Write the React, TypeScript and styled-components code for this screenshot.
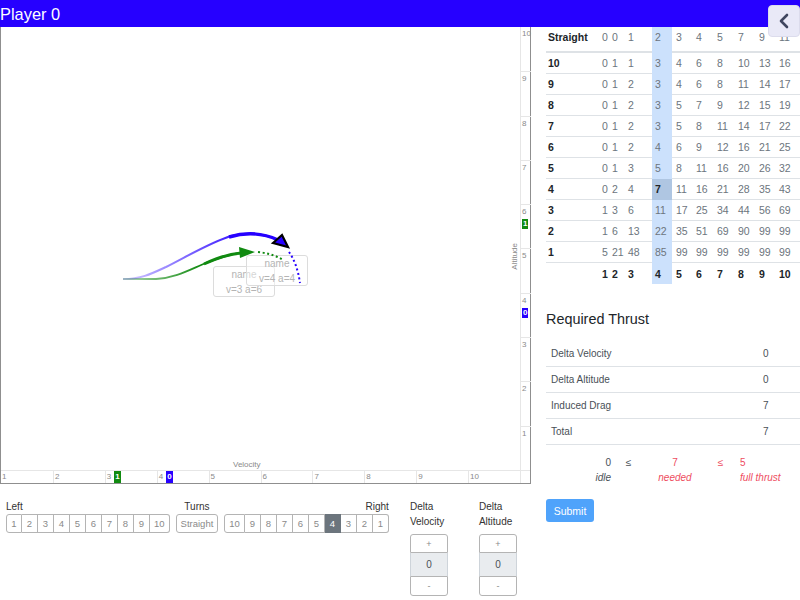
import React from "react";
import styled, { createGlobalStyle } from "styled-components";

const BLUE = "#2600ff";
const GREEN = "#108a10";
const RED = "#ee4c60";
const HL = "#cce1fc";
const HL_DARK = "#afc6e2";
const LINE = "#dee2e6";
const AXIS_LINE = "#e6e6e6";

const GlobalStyle = createGlobalStyle`
  * { box-sizing: border-box; }
  html, body { margin: 0; padding: 0; background: #fff; }
  body {
    font-family: "Liberation Sans", Arial, Helvetica, sans-serif;
    color: #212529;
    overflow: hidden;
  }
`;

const Header = styled.header`
  height: 27px;
  background: ${BLUE};
  color: #fff;
  font-size: 16.4px;
  line-height: 28px;
  white-space: nowrap;
`;

const BackButton = styled.button`
  position: fixed;
  top: 5px;
  right: 0;
  width: 32px;
  height: 32px;
  padding: 0;
  border: 1px solid #dcdcec;
  border-radius: 4px;
  background: #e9e9f7;
  display: flex;
  align-items: center;
  justify-content: center;
`;

const Page = styled.main`
  display: grid;
  grid-template-columns: 532px 268px;
  grid-template-rows: 457px auto;
`;

/* ---------- chart ---------- */
const ChartFrame = styled.div`
  width: 531px;
  height: 457px;
  border: 1px solid #8f8f8f;
  border-top: none;
  display: grid;
  grid-template-columns: 519px 10px;
  grid-template-rows: 443px 13px;
`;

const Plot = styled.div`
  position: relative;
  overflow: hidden;
`;

const PlotSvg = styled.svg`
  position: absolute;
  left: 0;
  top: 0;
`;

const AxisTitle = styled.div<{ $vertical?: boolean }>`
  position: absolute;
  font-size: 8px;
  line-height: 9px;
  color: #8a8a8a;
  white-space: nowrap;
  ${(p) =>
    p.$vertical
      ? `right: 1px; top: 216px; writing-mode: vertical-rl; transform: rotate(180deg);`
      : `left: 232px; top: 433px;`}
`;

const NameTag = styled.div<{ $x: number; $y: number }>`
  position: absolute;
  left: ${(p) => p.$x}px;
  top: ${(p) => p.$y}px;
  width: 62px;
  height: 31px;
  border: 1px solid #dcdcdc;
  border-radius: 3px;
  background: rgba(255, 255, 255, 0.45);
  color: #b4b4b4;
  font-size: 10px;
  line-height: 15px;
  text-align: center;
`;

const YAxis = styled.div`
  display: grid;
  grid-template-rows: repeat(10, 1fr);
  border-left: 1px solid ${AXIS_LINE};
`;

const YCell = styled.div<{ $first?: boolean }>`
  border-top: ${(p) => (p.$first ? "none" : `1px solid ${AXIS_LINE}`)};
  padding: 2px 0 0 1px;
  font-size: 8px;
  line-height: 9px;
  color: #8a8a8a;
  display: flex;
  flex-direction: column;
  align-items: flex-start;
`;

const XAxis = styled.div`
  display: grid;
  grid-template-columns: repeat(10, 1fr);
  border-top: 1px solid ${AXIS_LINE};
`;

const XCell = styled.div<{ $first?: boolean }>`
  border-left: ${(p) => (p.$first ? "none" : `1px solid ${AXIS_LINE}`)};
  padding-left: 1px;
  font-size: 8px;
  line-height: 12px;
  color: #8a8a8a;
  display: flex;
  align-items: center;
  gap: 3px;
`;

const Corner = styled.div`
  border-top: 1px solid ${AXIS_LINE};
  border-left: 1px solid ${AXIS_LINE};
`;

const Badge = styled.span<{ $color: string; $inY?: boolean }>`
  display: inline-block;
  background: ${(p) => p.$color};
  color: #fff;
  font-weight: 700;
  font-size: 8px;
  line-height: ${(p) => (p.$inY ? "10px" : "12px")};
  padding: 0 1px;
  margin-top: ${(p) => (p.$inY ? "3px" : "0")};
`;

/* ---------- right panel ---------- */
const RightTop = styled.section`
  padding-left: 14px;
  display: flex;
  flex-direction: column;
`;

const COLS = "54px 8px 12px 32px 20px 21px 21px 21px 21px 21px 23px";
const PADS = [2, 2, 4, 8, 3, 4, 3, 3, 3, 3, 2];

type Kind = "head" | "body" | "foot";

const TRow = styled.div<{ $kind: Kind }>`
  display: grid;
  grid-template-columns: ${COLS};
  height: ${(p) => (p.$kind === "head" ? 26 : 21)}px;
`;

const TCell = styled.div<{
  $kind: Kind;
  $hl?: boolean;
  $dark?: boolean;
  $strong?: boolean;
  $pad: number;
}>`
  display: flex;
  align-items: center;
  padding-left: ${(p) => p.$pad}px;
  padding-bottom: ${(p) => (p.$kind === "head" ? 4 : 0)}px;
  font-size: 10.5px;
  white-space: nowrap;
  font-weight: ${(p) => (p.$strong ? 700 : 400)};
  color: ${(p) => (p.$strong ? "#212529" : "#6c757d")};
  background: ${(p) => (p.$dark ? HL_DARK : p.$hl ? HL : "transparent")};
  border-bottom: ${(p) =>
    p.$kind === "head" ? "2px" : p.$kind === "body" ? "1px" : "0"}
    solid ${(p) => (p.$hl ? (p.$dark ? HL_DARK : HL) : LINE)};
`;

const ThrustTitle = styled.h2`
  margin: 27px 0 0;
  font-size: 14.4px;
  font-weight: 400;
  line-height: 17px;
  color: #212529;
`;

const ThrustTable = styled.div`
  margin-top: 13px;
  display: flex;
  flex-direction: column;
`;

const ThrustRow = styled.div`
  display: grid;
  grid-template-columns: 214px 40px;
  height: 26px;
  border-bottom: 1px solid ${LINE};
  font-size: 10px;
  color: #495057;
`;

const ThrustCell = styled.div<{ $value?: boolean }>`
  display: flex;
  align-items: center;
  padding-left: ${(p) => (p.$value ? 3 : 5)}px;
`;

const Summary = styled.div`
  margin-top: 10px;
  display: grid;
  grid-template-columns: 65px 35px 58px 33px 63px;
  font-size: 10px;
  line-height: 15px;
`;

const SumCell = styled.div<{
  $align: "left" | "center" | "right";
  $red?: boolean;
  $italic?: boolean;
}>`
  text-align: ${(p) => p.$align};
  padding-left: ${(p) => (p.$align === "left" ? 3 : 0)}px;
  color: ${(p) => (p.$red ? RED : "#495057")};
  font-style: ${(p) => (p.$italic ? "italic" : "normal")};
  white-space: nowrap;
`;

/* ---------- controls ---------- */
const Controls = styled.section`
  padding: 16px 0 0 6px;
  display: flex;
  align-items: flex-start;
`;

const TurnBlock = styled.div`
  flex-shrink: 0;
  display: grid;
  grid-template-columns: auto auto auto;
  column-gap: 6px;
`;

const TurnLabel = styled.div<{ $align: "start" | "center" | "end" }>`
  justify-self: ${(p) => p.$align};
  font-size: 10px;
  line-height: 14px;
  color: #333;
`;

const BtnGroup = styled.div`
  display: flex;
`;

const TurnBtn = styled.button<{ $active?: boolean; $pos: "first" | "mid" | "last" | "only" }>`
  height: 19px;
  min-width: 16px;
  margin: 0;
  padding: 0 4px;
  font-family: inherit;
  font-size: 9.5px;
  line-height: 17px;
  color: ${(p) => (p.$active ? "#fff" : "#8a8a8a")};
  background: ${(p) => (p.$active ? "#6c757d" : "#fff")};
  border: 1px solid ${(p) => (p.$active ? "#6c757d" : "#b4b4b4")};
  border-left-width: ${(p) => (p.$pos === "first" || p.$pos === "only" ? 1 : 0)}px;
  border-radius: ${(p) =>
    p.$pos === "only"
      ? "3px"
      : p.$pos === "first"
      ? "3px 0 0 3px"
      : p.$pos === "last"
      ? "0 3px 3px 0"
      : "0"};
`;

const StepBlock = styled.div<{ $gap: number }>`
  flex-shrink: 0;
  width: 69px;
  margin-left: ${(p) => p.$gap}px;
  margin-top: -1px;
`;

const StepLabel = styled.div`
  font-size: 10px;
  line-height: 15px;
  color: #333;
`;

const Stepper = styled.div`
  width: 38px;
  margin-top: 5px;
  display: flex;
  flex-direction: column;
`;

const StepBtn = styled.button<{ $top?: boolean }>`
  height: ${(p) => (p.$top ? 19 : 20)}px;
  margin: 0;
  padding: 0;
  font-family: inherit;
  font-size: 9px;
  color: #8a8a8a;
  background: #fff;
  border: 1px solid #b4b4b4;
  border-radius: ${(p) => (p.$top ? "3px 3px 0 0" : "0 0 3px 3px")};
`;

const StepValue = styled.div`
  height: 23px;
  background: #e9ecef;
  border-left: 1px solid #ced4da;
  border-right: 1px solid #ced4da;
  font-size: 10px;
  color: #495057;
  display: flex;
  align-items: center;
  justify-content: center;
`;

const SubmitCell = styled.div`
  padding: 15px 0 0 14px;
`;

const SubmitButton = styled.button`
  width: 48px;
  height: 23px;
  padding: 0;
  border: none;
  border-radius: 3px;
  background: #4fa3fb;
  color: #fff;
  font-family: inherit;
  font-size: 10.5px;
`;

/* ---------- data ---------- */
const STRAIGHT = [0, 0, 1, 2, 3, 4, 5, 7, 9, 11];
const ROWS: [number, number[]][] = [
  [10, [0, 1, 1, 3, 4, 6, 8, 10, 13, 16]],
  [9, [0, 1, 2, 3, 4, 6, 8, 11, 14, 17]],
  [8, [0, 1, 2, 3, 5, 7, 9, 12, 15, 19]],
  [7, [0, 1, 2, 3, 5, 8, 11, 14, 17, 22]],
  [6, [0, 1, 2, 4, 6, 9, 12, 16, 21, 25]],
  [5, [0, 1, 3, 5, 8, 11, 16, 20, 26, 32]],
  [4, [0, 2, 4, 7, 11, 16, 21, 28, 35, 43]],
  [3, [1, 3, 6, 11, 17, 25, 34, 44, 56, 69]],
  [2, [1, 6, 13, 22, 35, 51, 69, 90, 99, 99]],
  [1, [5, 21, 48, 85, 99, 99, 99, 99, 99, 99]],
];
const SEL_COL = 3;
const SEL_ROW = 4;

const THRUST = [
  ["Delta Velocity", "0"],
  ["Delta Altitude", "0"],
  ["Induced Drag", "7"],
  ["Total", "7"],
];

const posOf = (i: number, n: number): "first" | "mid" | "last" | "only" =>
  n === 1 ? "only" : i === 0 ? "first" : i === n - 1 ? "last" : "mid";

function TableRow({
  kind,
  label,
  values,
  rowNum,
  strongValues,
}: {
  kind: Kind;
  label: string;
  values: (number | string)[];
  rowNum?: number;
  strongValues?: boolean;
}) {
  return (
    <TRow $kind={kind}>
      <TCell $kind={kind} $pad={PADS[0]} $strong>
        {label}
      </TCell>
      {values.map((v, i) => (
        <TCell
          key={i}
          $kind={kind}
          $pad={PADS[i + 1]}
          $hl={i === SEL_COL}
          $dark={i === SEL_COL && rowNum === SEL_ROW}
          $strong={strongValues || (i === SEL_COL && rowNum === SEL_ROW)}
        >
          {v}
        </TCell>
      ))}
    </TRow>
  );
}

function Chart() {
  return (
    <ChartFrame>
      <Plot>
        <NameTag $x={212} $y={239}>
          name
          <br />
          v=3 a=6
        </NameTag>
        <NameTag $x={245} $y={228}>
          name
          <br />
          v=4 a=4
        </NameTag>
        <PlotSvg width="519" height="443" viewBox="0 0 519 443">
          <defs>
            <linearGradient id="blueFade" gradientUnits="userSpaceOnUse" x1="122" y1="0" x2="225" y2="0">
              <stop offset="0" stopColor={BLUE} stopOpacity="0.18" />
              <stop offset="1" stopColor={BLUE} stopOpacity="0.85" />
            </linearGradient>
            <linearGradient id="greenFade" gradientUnits="userSpaceOnUse" x1="122" y1="0" x2="200" y2="0">
              <stop offset="0" stopColor={GREEN} stopOpacity="0.3" />
              <stop offset="1" stopColor={GREEN} stopOpacity="1" />
            </linearGradient>
          </defs>
          {/* green plane */}
          <path
            d="M122,252 L155,252 C175,251 190,242 205,236 C218,231 228,227 240,226"
            fill="none"
            stroke="url(#greenFade)"
            strokeWidth="1.8"
          />
          <path d="M203,237 C216,231 228,227 240,226" fill="none" stroke={GREEN} strokeWidth="3" />
          <polygon points="238,220 239,231 254,225" fill={GREEN} />
          <path
            d="M257,225 C266,226 274,228 282,233"
            fill="none"
            stroke={GREEN}
            strokeWidth="2"
            strokeDasharray="2 2.6"
          />
          {/* blue plane */}
          <path
            d="M122,252 C140,252 150,247 165,240 C185,230 210,215 230,209 C245,205 262,206 277,213"
            fill="none"
            stroke="url(#blueFade)"
            strokeWidth="2"
          />
          <path d="M228,210 C245,205 262,206 277,213" fill="none" stroke={BLUE} strokeWidth="3.4" />
          <polygon
            points="272,216 281,208 287,220"
            fill={BLUE}
            stroke="#000"
            strokeWidth="2.2"
            strokeLinejoin="miter"
          />
          <path
            d="M288,225 C293,232 297,242 299,256"
            fill="none"
            stroke={BLUE}
            strokeWidth="2"
            strokeDasharray="2 2.6"
          />
        </PlotSvg>
        <AxisTitle>Velocity</AxisTitle>
        <AxisTitle $vertical>Altitude</AxisTitle>
      </Plot>
      <YAxis>
        {[10, 9, 8, 7, 6, 5, 4, 3, 2, 1].map((n, i) => (
          <YCell key={n} $first={i === 0}>
            <span>{n}</span>
            {n === 6 && (
              <Badge $color={GREEN} $inY>
                1
              </Badge>
            )}
            {n === 4 && (
              <Badge $color={BLUE} $inY>
                0
              </Badge>
            )}
          </YCell>
        ))}
      </YAxis>
      <XAxis>
        {[1, 2, 3, 4, 5, 6, 7, 8, 9, 10].map((n, i) => (
          <XCell key={n} $first={i === 0}>
            <span>{n}</span>
            {n === 3 && <Badge $color={GREEN}>1</Badge>}
            {n === 4 && <Badge $color={BLUE}>0</Badge>}
          </XCell>
        ))}
      </XAxis>
      <Corner />
    </ChartFrame>
  );
}

export default function App() {
  const left = ["1", "2", "3", "4", "5", "6", "7", "8", "9", "10"];
  const right = ["10", "9", "8", "7", "6", "5", "4", "3", "2", "1"];
  return (
    <>
      <GlobalStyle />
      <Header>Player 0</Header>
      <BackButton aria-label="back">
        <svg width="12" height="16" viewBox="0 0 12 16">
          <polyline
            points="9,2 3,8 9,14"
            fill="none"
            stroke="#40465f"
            strokeWidth="2.6"
            strokeLinecap="round"
            strokeLinejoin="round"
          />
        </svg>
      </BackButton>
      <Page>
        <Chart />
        <RightTop>
          <div>
            <TableRow kind="head" label="Straight" values={STRAIGHT} />
            {ROWS.map(([n, vals]) => (
              <TableRow key={n} kind="body" label={String(n)} values={vals} rowNum={n} />
            ))}
            <TableRow kind="foot" label="" values={[1, 2, 3, 4, 5, 6, 7, 8, 9, 10]} strongValues />
          </div>
          <ThrustTitle>Required Thrust</ThrustTitle>
          <ThrustTable>
            {THRUST.map(([k, v]) => (
              <ThrustRow key={k}>
                <ThrustCell>{k}</ThrustCell>
                <ThrustCell $value>{v}</ThrustCell>
              </ThrustRow>
            ))}
          </ThrustTable>
          <Summary>
            <SumCell $align="right">0</SumCell>
            <SumCell $align="center">≤</SumCell>
            <SumCell $align="center" $red>
              7
            </SumCell>
            <SumCell $align="center" $red>
              ≤
            </SumCell>
            <SumCell $align="left" $red>
              5
            </SumCell>
            <SumCell $align="right" $italic>
              idle
            </SumCell>
            <SumCell $align="center" />
            <SumCell $align="center" $red $italic>
              needed
            </SumCell>
            <SumCell $align="center" />
            <SumCell $align="left" $red $italic>
              full thrust
            </SumCell>
          </Summary>
        </RightTop>
        <Controls>
          <TurnBlock>
            <TurnLabel $align="start">Left</TurnLabel>
            <TurnLabel $align="center">Turns</TurnLabel>
            <TurnLabel $align="end">Right</TurnLabel>
            <BtnGroup>
              {left.map((t, i) => (
                <TurnBtn key={t} $pos={posOf(i, left.length)}>
                  {t}
                </TurnBtn>
              ))}
            </BtnGroup>
            <BtnGroup>
              <TurnBtn $pos="only">Straight</TurnBtn>
            </BtnGroup>
            <BtnGroup>
              {right.map((t, i) => (
                <TurnBtn key={t} $pos={posOf(i, right.length)} $active={t === "4"}>
                  {t}
                </TurnBtn>
              ))}
            </BtnGroup>
          </TurnBlock>
          <StepBlock $gap={21}>
            <StepLabel>Delta</StepLabel>
            <StepLabel>Velocity</StepLabel>
            <Stepper>
              <StepBtn $top>+</StepBtn>
              <StepValue>0</StepValue>
              <StepBtn>-</StepBtn>
            </Stepper>
          </StepBlock>
          <StepBlock $gap={0}>
            <StepLabel>Delta</StepLabel>
            <StepLabel>Altitude</StepLabel>
            <Stepper>
              <StepBtn $top>+</StepBtn>
              <StepValue>0</StepValue>
              <StepBtn>-</StepBtn>
            </Stepper>
          </StepBlock>
        </Controls>
        <SubmitCell>
          <SubmitButton>Submit</SubmitButton>
        </SubmitCell>
      </Page>
    </>
  );
}
